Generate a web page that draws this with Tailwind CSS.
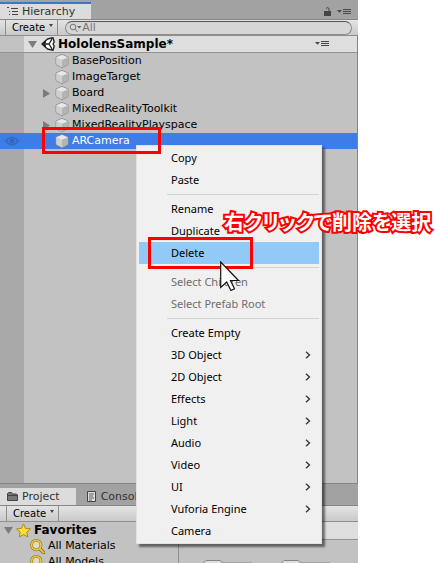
<!DOCTYPE html>
<html lang="ja">
<head>
<meta charset="utf-8">
<meta name="viewport" content="width=device-width, initial-scale=1">
<title>Hierarchy</title>
<script src="https://cdn.jsdelivr.net/npm/@tailwindcss/browser@4"></script>
</head>
<body class="bg-white font-['DejaVu_Sans',sans-serif] text-[11px] leading-4 text-black">
<svg class="hidden" aria-hidden="true">
  <defs>
    <symbol id="cube" viewBox="0 0 14 14">
      <path d="M7 .5 13 3v7.500L7 13.700 1 10.500V3z" fill="#d6d6d6" stroke="#8a8a8a" stroke-width=".9"/>
      <path d="M1.400 3.200 7 5.700v7.500l-5.600-3z" fill="#cfcfcf"/>
      <path d="M12.600 3.200 7 5.700v7.500l5.600-3z" fill="#b4b4b4"/>
      <path d="M7 1 12.600 3.200 7 5.700 1.400 3.200z" fill="#e8e8e8"/>
    </symbol>
    <symbol id="magnifier" viewBox="0 0 16 16">
      <path d="m10 10 4.500 4.500" stroke="#7a6210" stroke-width="3.600" stroke-linecap="round"/>
      <circle cx="6.700" cy="6.500" r="5" fill="#dcdcd4" stroke="#8a7016" stroke-width="3"/>
      <circle cx="6.700" cy="6.500" r="5" fill="none" stroke="#f0c93a" stroke-width="1.800"/>
      <path d="m10.500 10.500 4 4" stroke="#f0c93a" stroke-width="2" stroke-linecap="round"/>
    </symbol>
    <symbol id="options" viewBox="0 0 14 7">
      <path d="M0 2h5L2.500 4.800z" fill="#484848"/>
      <path d="M6 1.500h8M6 3.500h8M6 5.500h8" stroke="#484848" stroke-width="1"/>
    </symbol>
    <symbol id="chevron" viewBox="0 0 6 8">
      <path d="m1 .7 3.500 3.300L1 7.300" fill="none" stroke="#333" stroke-width="1.300"/>
    </symbol>
  </defs>
</svg>

<main class="relative flex h-screen min-h-[563px] w-full max-w-[358px] flex-col overflow-hidden bg-[#a2a2a2]">
  <section class="flex grow flex-col" aria-label="Hierarchy">
    <header class="flex h-[19px] shrink-0 items-end justify-between pr-[7px]">
      <button class="flex h-[17px] items-center gap-1 border-t-2 border-[#3d76c4] bg-[#dcdcdc] pr-4 pl-[7px] text-[#333]">
        <svg class="h-[9px] w-[11px]" viewBox="0 0 11 9"><path d="M0 .5h2M4 1.500h7M2 4.500h1M5 4.500h6M2 7.500h1M5 7.500h6" stroke="#444"/></svg>
        <span>Hierarchy</span>
      </button>
      <div class="flex items-center gap-1.5 pb-[3px]">
        <button aria-label="Lock"><svg class="h-[9px] w-[7px]" viewBox="0 0 7 9"><path d="M0 4h7v5H0z" fill="#444"/><path d="M2 1.500Q3.500-.3 5 1.500V4" fill="none" stroke="#444"/></svg></button>
        <button aria-label="Panel options"><svg class="h-[7px] w-3.5"><use href="#options"/></svg></button>
      </div>
    </header>
    <div class="flex h-[17px] shrink-0 items-center border-y border-t-[#858585] border-b-[#8f8f8f] bg-linear-to-b from-[#e4e4e4] to-[#c9c9c9] pr-1.5 pl-[5px]">
      <button class="flex h-full items-center gap-1 border-x border-[#8f8f8f] px-1 pl-1.5 text-[10px]">Create
        <svg class="mb-1 h-[3px] w-1" viewBox="0 0 4 3"><path d="M0 0h4L2 3z" fill="#444"/></svg></button>
      <label class="ml-[7px] flex h-3.5 grow items-center rounded-full border border-t-[#555] border-[#8b8b8b] bg-[#d6d6d6] pl-[3px] text-[#666]">
        <svg class="h-2.5 w-[13px]" viewBox="0 0 13 10"><circle cx="4" cy="4" r="2.800" fill="none" stroke="#777"/><path d="m6 6 2.500 3" stroke="#777"/><path d="M8 3h4.500L10.200 5.500z" fill="#666"/></svg>
        <input type="text" aria-label="Search" placeholder="All" class="min-w-0 grow bg-transparent text-[11px] leading-3 outline-none placeholder:text-[#777]">
      </label>
    </div>
    <div class="flex grow border-r border-b border-[#858585] bg-[#c2c2c2] bg-linear-to-r from-[#a9a9a9] from-[24px] to-[#c2c2c2] to-[24px]">
      <div class="grow">
        <div class="flex h-[17px] border-b border-[#929292] bg-[#dedede]">
          <div class="w-6 shrink-0 bg-[#c2c2c2]"></div>
          <div class="flex grow items-center pl-1 text-[12px] font-bold">
            <svg class="h-[7px] w-[9px]" viewBox="0 0 9 7"><path d="M0 0h9L4.500 7z" fill="#7b7b7b"/></svg>
            <svg class="mx-[3px] ml-1 h-3.5 w-3.5" viewBox="0 0 14 14"><path d="M12 .8 6.500 2 1 7l5.500 5L12 13.200 13.200 9 12 7l1.200-2z" fill="#fff" stroke="#222" stroke-width="1.400" stroke-linejoin="round"/><path d="M3 7h5M8 7l3-4.800M8 7l3 4.800" stroke="#222" stroke-width="1.300"/><path d="M1 7l4-3.500v2L3.800 7 5 8.500v2z" fill="#222"/></svg>
            <span>HololensSample*</span>
          </div>
          <button aria-label="Scene options" class="mr-7 pb-px"><svg class="h-[7px] w-3.5"><use href="#options"/></svg></button>
        </div>
        <ul>
          <li class="flex h-4 items-center gap-[3px] pl-[55px]"><svg class="h-3.5 w-3.5"><use href="#cube"/></svg>BasePosition</li>
          <li class="flex h-4 items-center gap-[3px] pl-[55px]"><svg class="h-3.5 w-3.5"><use href="#cube"/></svg>ImageTarget</li>
          <li class="flex h-4 items-center gap-[3px] pl-[43px]"><svg class="mr-0.5 h-[9px] w-[7px]" viewBox="0 0 7 9"><path d="M0 0v9l7-4.500z" fill="#7b7b7b"/></svg><svg class="h-3.5 w-3.5"><use href="#cube"/></svg>Board</li>
          <li class="flex h-4 items-center gap-[3px] pl-[55px]"><svg class="h-3.5 w-3.5"><use href="#cube"/></svg>MixedRealityToolkit</li>
          <li class="flex h-4 items-center gap-[3px] pl-[43px]"><svg class="mr-0.5 h-[9px] w-[7px]" viewBox="0 0 7 9"><path d="M0 0v9l7-4.500z" fill="#7b7b7b"/></svg><svg class="h-3.5 w-3.5"><use href="#cube"/></svg>MixedRealityPlayspace</li>
          <li class="flex h-4 items-center gap-[3px] bg-[#3e7de7] pl-[5px] text-white"><svg class="mr-[33px] h-2.5 w-3.5" viewBox="0 0 14 10"><path d="M.7 5Q7-2.500 13.300 5 7 12.500 .7 5z" fill="none" stroke="#3567b8" stroke-width="1.200"/><circle cx="7" cy="5" r="2.500" fill="#3567b8"/></svg><svg class="h-3.5 w-3.5"><use href="#cube"/></svg>ARCamera</li>
        </ul>
      </div>
    </div>
  </section>

  <section class="mt-1 flex h-[75px] shrink-0 flex-col overflow-hidden" aria-label="Project">
    <header class="flex h-[17px] shrink-0 text-[#333]">
      <button class="flex items-center gap-1 bg-[#dcdcdc] pr-4 pl-[7px]"><svg class="h-[9px] w-[11px]" viewBox="0 0 11 9"><path d="M.5 8.500v-7l1-1h3l1 1.500h4l1 1v5.500z" fill="#777" stroke="#444"/><path d="M1 3.500h9" stroke="#444"/></svg>Project</button>
      <button class="flex items-center gap-[5px] pl-[11px]"><svg class="h-[11px] w-[9px]" viewBox="0 0 9 11"><path d="M.5.5h8v10h-8z" fill="#ddd" stroke="#444"/><path d="M2 3h5M2 5h4M2 7h5M2 9h3" stroke="#444" stroke-width=".8"/></svg>Console</button>
    </header>
    <div class="flex h-[17px] shrink-0 border-y border-t-[#858585] border-b-[#8f8f8f] bg-linear-to-b from-[#e4e4e4] to-[#c9c9c9] pl-1.5">
      <button class="flex items-center gap-1 border-x border-[#8f8f8f] px-1 pl-1.5 text-[10px]">Create
        <svg class="mb-1 h-[3px] w-1" viewBox="0 0 4 3"><path d="M0 0h4L2 3z" fill="#444"/></svg></button>
    </div>
    <div class="flex grow bg-[#c2c2c2]">
      <ul class="h-12 w-1/2 shrink-0 border-r border-[#8f8f8f]">
        <li class="flex h-4 items-center gap-[3px] pl-1 text-[12px] font-bold"><svg class="h-[7px] w-[9px]" viewBox="0 0 9 7"><path d="M0 0h9L4.500 7z" fill="#7b7b7b"/></svg><svg class="h-[15px] w-[15px]" viewBox="0 0 15 15"><path d="m7.500 1 2 4.300 4.800.6-3.500 3.200 1 4.800-4.300-2.400-4.300 2.400 1-4.800L.7 5.900l4.800-.6z" fill="#ffdf3d" stroke="#a98917"/></svg>Favorites</li>
        <li class="flex h-4 items-center gap-[3px] pl-[30px]"><svg class="h-[15px] w-[15px]"><use href="#magnifier"/></svg>All Materials</li>
        <li class="flex h-4 items-center gap-[3px] pl-[30px]"><svg class="h-[15px] w-[15px]"><use href="#magnifier"/></svg>All Models</li>
      </ul>
      <div class="grow">
        <div class="h-[18px] border-b border-[#929292] bg-[#dedede]"></div>
        <div class="flex gap-7 pt-5 pl-6">
          <svg class="h-10 w-[50px]" viewBox="0 0 50 40"><path d="M.5 39V3L3 .5h14L20 3h29v36z" fill="#ddd" stroke="#858585"/></svg>
          <svg class="h-10 w-[50px]" viewBox="0 0 50 40"><path d="M.5 39V3L3 .5h14L20 3h29v36z" fill="#ddd" stroke="#858585"/></svg>
        </div>
      </div>
    </div>
  </section>
</main>

<div role="menu" class="absolute top-[145px] left-[136px] flex w-[186px] flex-col border border-[#e2e2e2] bg-[#f0f0f0] px-0.5 py-px font-['Noto_Sans',sans-serif] text-[11px] shadow-[3px_3px_2px_rgba(0,0,0,0.5)] *:shrink-0">
  <button role="menuitem" class="h-[22px] pl-8 text-left">Copy</button>
  <button role="menuitem" class="h-[22px] pl-8 text-left">Paste</button>
  <hr class="my-[3px] ml-7 border-[#d2d2d2]">
  <button role="menuitem" class="h-[22px] pl-8 text-left">Rename</button>
  <button role="menuitem" class="h-[22px] pl-8 text-left">Duplicate</button>
  <button role="menuitem" class="h-[22px] bg-[#91c9f7] pl-8 text-left">Delete</button>
  <hr class="my-[3px] ml-7 border-[#d2d2d2]">
  <button role="menuitem" disabled class="h-[22px] pl-8 text-left text-[#6d6d6d]">Select Children</button>
  <button role="menuitem" disabled class="h-[22px] pl-8 text-left text-[#6d6d6d]">Select Prefab Root</button>
  <hr class="my-[3px] ml-7 border-[#d2d2d2]">
  <button role="menuitem" class="h-[22px] pl-8 text-left">Create Empty</button>
  <button role="menuitem" class="flex h-[22px] items-center justify-between pr-2 pl-8">3D Object<svg class="h-2 w-1.5"><use href="#chevron"/></svg></button>
  <button role="menuitem" class="flex h-[22px] items-center justify-between pr-2 pl-8">2D Object<svg class="h-2 w-1.5"><use href="#chevron"/></svg></button>
  <button role="menuitem" class="flex h-[22px] items-center justify-between pr-2 pl-8">Effects<svg class="h-2 w-1.5"><use href="#chevron"/></svg></button>
  <button role="menuitem" class="flex h-[22px] items-center justify-between pr-2 pl-8">Light<svg class="h-2 w-1.5"><use href="#chevron"/></svg></button>
  <button role="menuitem" class="flex h-[22px] items-center justify-between pr-2 pl-8">Audio<svg class="h-2 w-1.5"><use href="#chevron"/></svg></button>
  <button role="menuitem" class="flex h-[22px] items-center justify-between pr-2 pl-8">Video<svg class="h-2 w-1.5"><use href="#chevron"/></svg></button>
  <button role="menuitem" class="flex h-[22px] items-center justify-between pr-2 pl-8">UI<svg class="h-2 w-1.5"><use href="#chevron"/></svg></button>
  <button role="menuitem" class="flex h-[22px] items-center justify-between pr-2 pl-8">Vuforia Engine<svg class="h-2 w-1.5"><use href="#chevron"/></svg></button>
  <button role="menuitem" class="h-[22px] pl-8 text-left">Camera</button>
</div>

<div class="absolute top-[127px] left-[42px] h-[27px] w-[119px] border-3 border-[#ff0000]"></div>
<div class="absolute top-[237px] left-[148px] h-8 w-[105px] border-3 border-[#ff0000]"></div>
<p class="absolute top-[206px] left-[224px] font-['Noto_Sans_CJK_JP',sans-serif] text-[20px] leading-8 font-bold whitespace-nowrap text-white [-webkit-text-stroke:4px_#ff0000] [font-feature-settings:'palt'] [paint-order:stroke]">右クリックで削除を選択</p>
<svg class="absolute top-[261px] left-[220px] h-[30px] w-5" viewBox="0 0 20 30" aria-hidden="true"><path d="M.7 1v25.500l6-5.500 4.200 8.500 3.600-1.800-4-8.200h8z" fill="#fff" stroke="#111" stroke-width="1.200"/></svg>
</body>
</html>
